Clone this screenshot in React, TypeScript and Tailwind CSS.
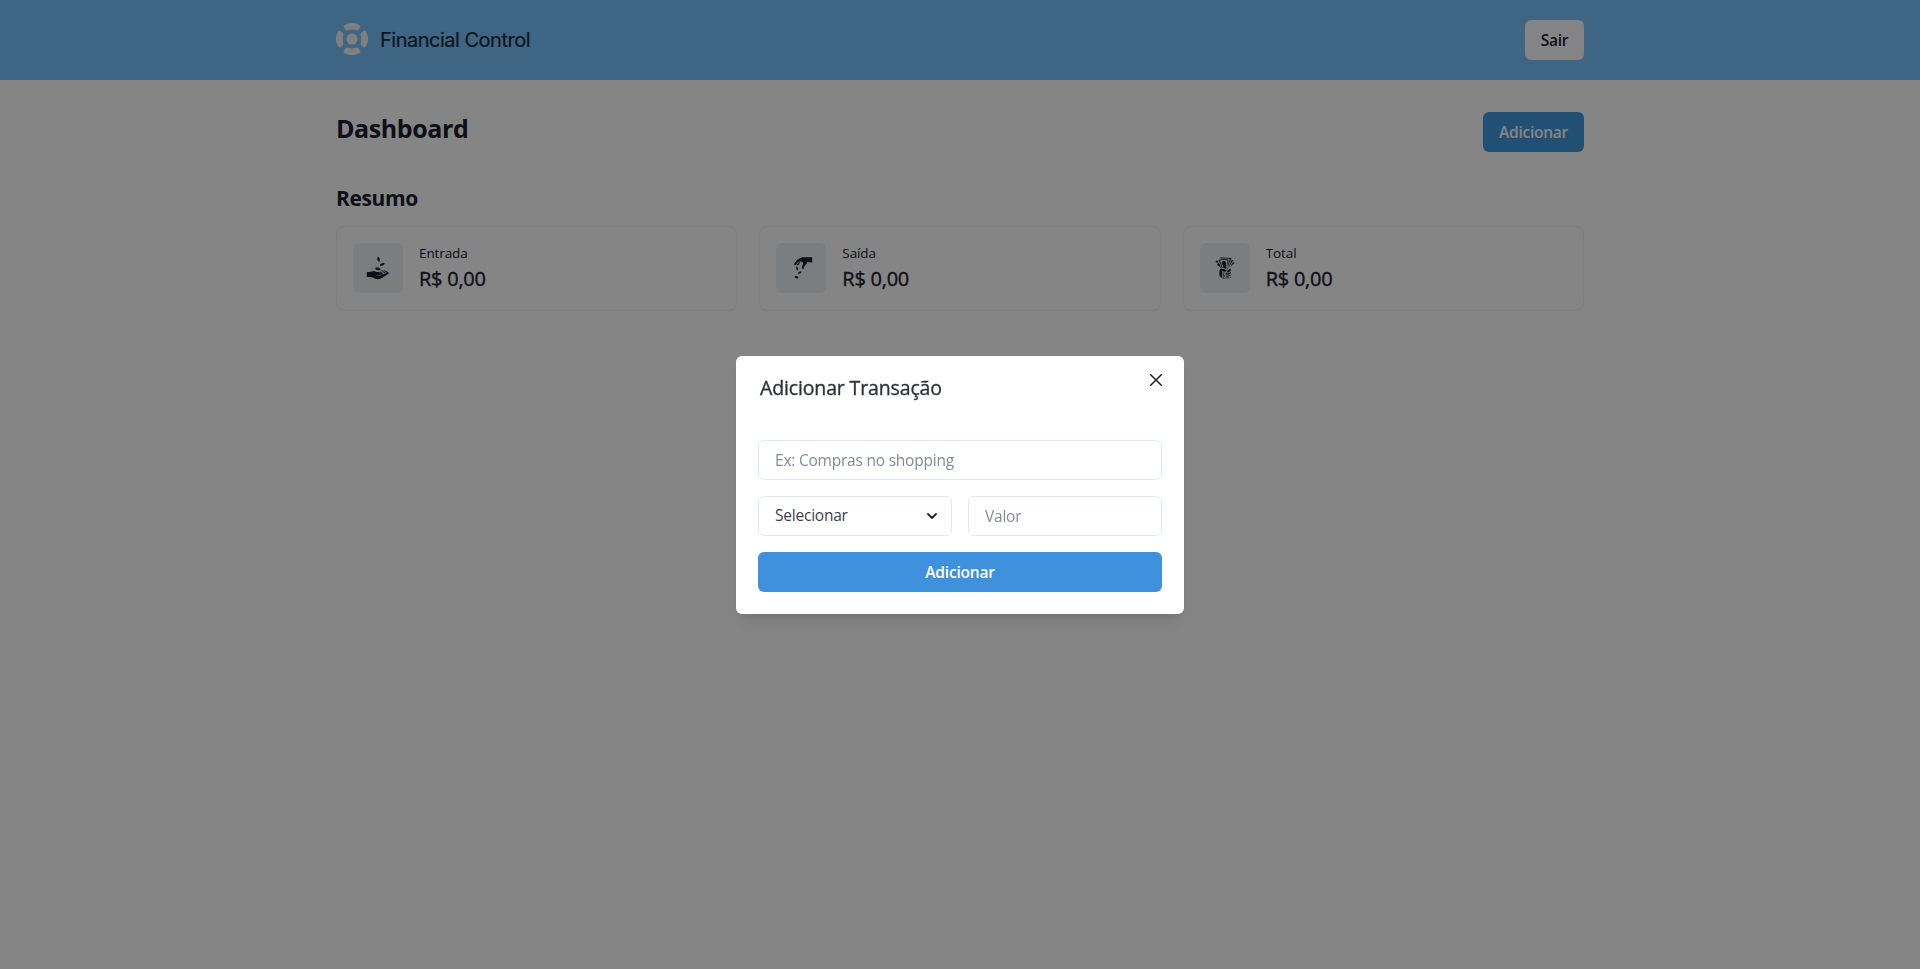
import type { ReactNode } from 'react';
import { GiPayMoney, GiReceiveMoney, GiTakeMyMoney } from 'react-icons/gi';

function Logo() {
  return (
    <svg viewBox="0 0 32 32" className="size-8" fill="#f3f4f6">
      <circle cx="16" cy="16" r="5.5" />
      {[0, 90, 180, 270].map((angle) => (
        <path
          key={angle}
          transform={`rotate(${angle} 16 16)`}
          d="M7.500 3.800C6.900 2.500 11.500 0 16 0s9.100 2.500 8.500 3.800L22.600 6.600c-.7 1-1.500 1-2.500.7a13 13 0 0 0-8.200 0c-1 .3-1.800.3-2.500-.7z"
        />
      ))}
    </svg>
  );
}

function SummaryCard({ icon, label, value }: { icon: ReactNode; label: string; value: string }) {
  return (
    <div className="flex h-[85px] items-start gap-4 rounded-lg border border-[#f0f1f3] p-4">
      <div className="flex size-[50px] items-center justify-center rounded-md bg-[#ebeff3]">{icon}</div>
      <div className="flex flex-col">
        <span className="text-[13.5px] leading-[21px] tracking-[-0.1px]">{label}</span>
        <span className="text-[20px] leading-[30px] tracking-[-0.25px] [-webkit-text-stroke:0.35px_currentColor]">
          {value}
        </span>
      </div>
    </div>
  );
}

const field =
  "h-10 w-full min-w-0 rounded-md border border-[#e2e8f0] bg-white px-4 text-[15.5px] tracking-[-0.22px] outline-none placeholder:text-[#828b9a]";

export default function App() {
  return (
    <div className="h-[969px] overflow-hidden bg-white font-['Open_Sans','Noto_Sans',sans-serif] text-[#1a202c]">
      <header className="h-20 bg-[#77c2fb]">
        <div className="mx-auto flex h-full w-[1248px] items-center justify-between">
          <div className="flex items-center gap-[11px]">
            <div className="-mt-0.5">
              <Logo />
            </div>
            <span className="pl-px font-['Inter',sans-serif] text-[20px] tracking-[-0.5px] text-[#1a2c3c] [-webkit-text-stroke:0.2px_currentColor]">
              Financial Control
            </span>
          </div>
          <button className="h-10 w-[59px] rounded-md bg-[#fdfbff] pt-px text-[15.5px] font-semibold tracking-[-0.3px]">
            Sair
          </button>
        </div>
      </header>

      <main className="mx-auto w-[1248px] pt-8">
        <div className="flex items-start justify-between">
          <h1 className="text-[25px] leading-8 font-bold tracking-[-0.4px]">Dashboard</h1>
          <button className="h-10 w-[101px] rounded-md bg-[#4299e1] pt-px text-[15.5px] font-semibold tracking-[-0.25px] text-white">
            Adicionar
          </button>
        </div>
        <h2 className="mt-8 text-[21px] leading-7 font-bold tracking-[-0.4px]">Resumo</h2>
        <section className="mt-[14px] grid grid-cols-3 gap-[22px]">
          <SummaryCard icon={<GiReceiveMoney size={24} />} label="Entrada" value="R$ 0,00" />
          <SummaryCard icon={<GiPayMoney size={24} />} label="Saída" value="R$ 0,00" />
          <SummaryCard icon={<GiTakeMyMoney size={24} />} label="Total" value="R$ 0,00" />
        </section>
      </main>

      <div className="fixed inset-0 flex items-start justify-center bg-black/48 pt-[356px]">
        <div
          role="dialog"
          className="relative h-[258px] w-[448px] rounded-md bg-white px-[22px] shadow-[0_10px_15px_-3px_rgba(0,0,0,0.1),0_4px_6px_-2px_rgba(0,0,0,0.05)]"
        >
          <h3 className="pt-4 pl-0.5 text-[19.5px] leading-8 tracking-[-0.14px] text-[#2d323d] [-webkit-text-stroke:0.35px_currentColor]">
            Adicionar Transação
          </h3>
          <button aria-label="Fechar" className="absolute top-2 right-3 flex size-8 items-center justify-center">
            <svg viewBox="0 0 12 12" className="size-3" stroke="#1d2129" strokeWidth="1.5" strokeLinecap="round">
              <path d="M.7.7l10.600 10.600M11.300.7L.7 11.300" />
            </svg>
          </button>
          <form className="mt-9 flex flex-col gap-4">
            <input className={field} placeholder="Ex: Compras no shopping" />
            <div className="grid grid-cols-2 gap-4">
              <button type="button" className={`${field} flex items-center justify-between pr-3.5 text-[#3c414b]`}>
                Selecionar
                <svg viewBox="0 0 10 6" className="h-1.5 w-2.5" fill="none" stroke="#1a202c" strokeWidth="1.800" strokeLinecap="round" strokeLinejoin="round">
                  <path d="M1 1l4 4 4-4" />
                </svg>
              </button>
              <input className={field} placeholder="Valor" />
            </div>
            <button type="button" className="h-10 rounded-md bg-[#4091dd] pt-px text-[15.5px] font-semibold tracking-[-0.2px] text-white">
              Adicionar
            </button>
          </form>
        </div>
      </div>
    </div>
  );
}
